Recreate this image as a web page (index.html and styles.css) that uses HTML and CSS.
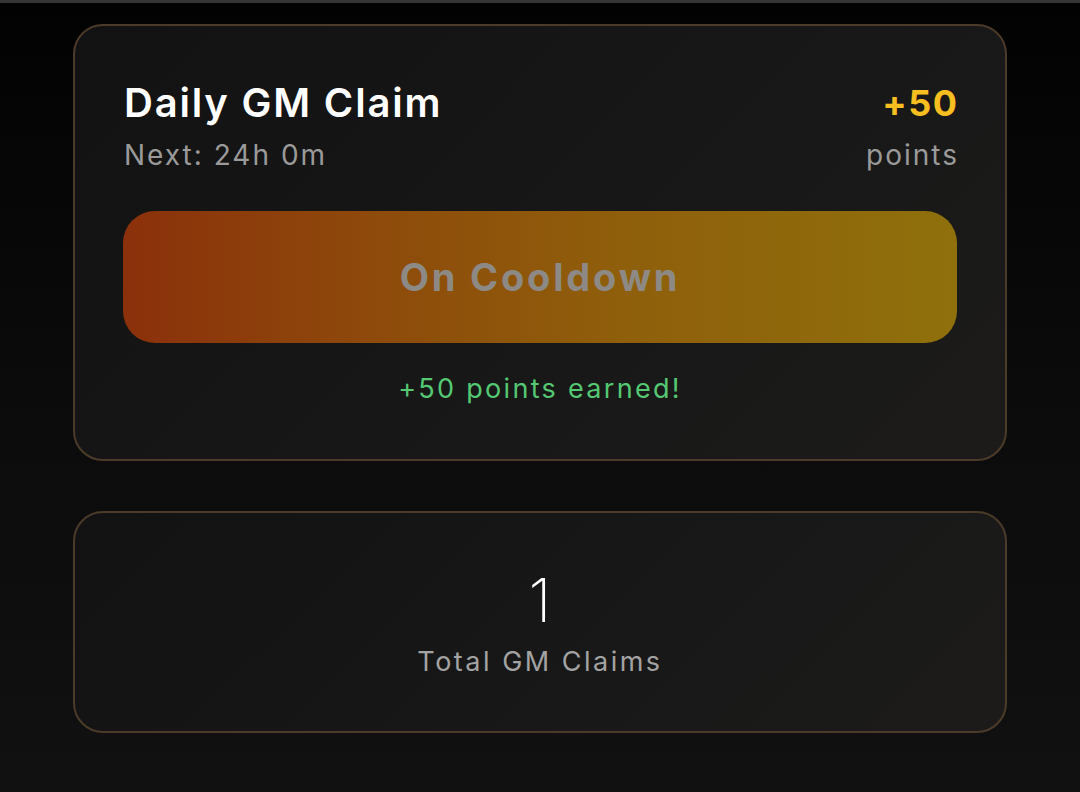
FILE: index.html
```html
<!DOCTYPE html>
<html lang="en">
<head>
<meta charset="utf-8">
<title>Daily GM Claim</title>
<link rel="stylesheet" href="styles.css">
</head>
<body>
<div class="topbar"></div>
<main class="page">
  <section class="card claim">
    <div class="claim-head">
      <div class="claim-left">
        <h1 class="title">Daily GM Claim</h1>
        <div class="sub">Next: 24h 0m</div>
      </div>
      <div class="claim-right">
        <div class="reward">+50</div>
        <div class="sub">points</div>
      </div>
    </div>
    <button class="cooldown" disabled>On Cooldown</button>
    <div class="earned">+50 points earned!</div>
  </section>
  <section class="card stats">
    <div class="count">1</div>
    <div class="count-label">Total GM Claims</div>
  </section>
</main>
</body>
</html>
```
FILE: styles.css
```css
* { box-sizing: border-box; }
html, body { margin: 0; padding: 0; }
body {
  width: 1080px;
  height: 792px;
  overflow: hidden;
  background: linear-gradient(180deg, #020202 0%, #0b0b0b 50%, #111111 100%);
  font-family: Inter, "Open Sans", sans-serif;
  color: #fff;
}
.topbar { height: 3px; background: #343434; }
.page {
  display: flex;
  flex-direction: column;
  gap: 50px;
  padding: 21px 73px 0 73px;
}
.card {
  border: 2px solid #4d3b29;
  border-radius: 30px;
  background: linear-gradient(135deg, #121212 0%, #171717 50%, #1c1b1a 100%);
}
.claim { padding: 53px 48px 53px 48px; }
.claim-head { display: flex; justify-content: space-between; align-items: flex-start; padding-left: 1px; }
.claim-left, .claim-right { display: flex; flex-direction: column; }
.claim-right { align-items: flex-end; }
.title {
  margin: 0;
  font-size: 40px;
  line-height: 48px;
  font-weight: 600;
  color: #fff;
  letter-spacing: 1.8px;
}
.reward {
  font-size: 36px;
  line-height: 48px;
  font-weight: 700;
  color: #f6be1e;
  letter-spacing: 1.5px;
  margin-right: -1.5px;
}
.sub {
  font-size: 28px;
  line-height: 34px;
  margin-top: 11px;
  color: #9a9a9a;
  letter-spacing: 2px;
}
.claim-right .sub { margin-right: -2px; }
.cooldown {
  display: block;
  width: 100%;
  height: 132px;
  margin-top: 39px;
  border: none;
  border-radius: 32px;
  background: linear-gradient(90deg, #8b300b 0%, #8e4a0b 30%, #8f5f0b 60%, #8f700c 100%);
  font-family: inherit;
  font-size: 38px;
  font-weight: 700;
  color: #8d8a86;
  letter-spacing: 2.8px;
}
.earned {
  margin-top: 29px;
  text-align: center;
  font-size: 27px;
  line-height: 34px;
  color: #54c872;
  letter-spacing: 2.3px;
}
.stats {
  height: 222px;
  display: flex;
  flex-direction: column;
  align-items: center;
  justify-content: center;
  padding-top: 2px;
}
.count {
  font-size: 60px;
  line-height: 66px;
  font-weight: 200;
  color: #fff;
}
.count-label {
  margin-top: 12px;
  font-size: 27px;
  line-height: 34px;
  color: #a3a3a3;
  letter-spacing: 2.5px;
}
```
